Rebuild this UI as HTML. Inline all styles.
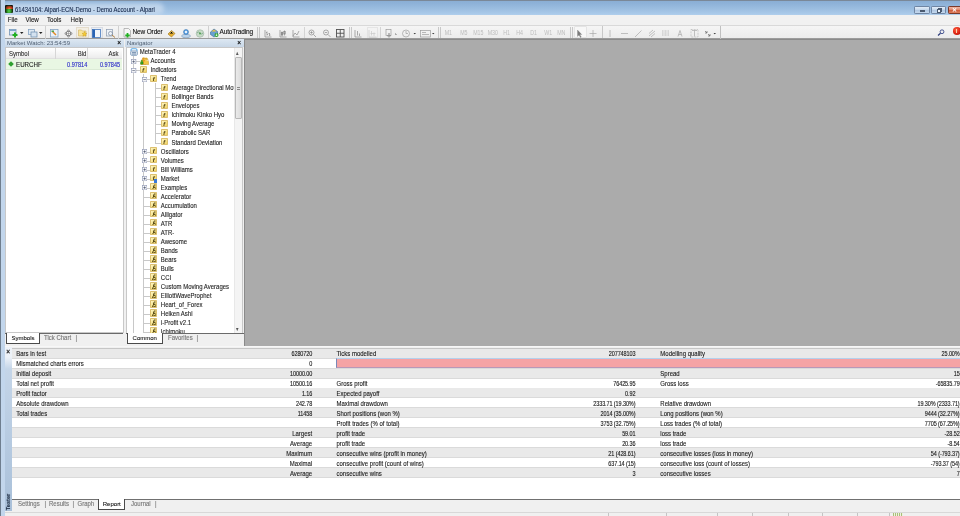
<!DOCTYPE html><html><head><meta charset="utf-8"><style>
*{box-sizing:border-box;margin:0;padding:0}
html,body{width:960px;height:516px;overflow:hidden;background:#f0f0f0}
body{position:relative;font-family:"Liberation Sans",sans-serif;font-size:6.0px;letter-spacing:0;color:#1a1a1a}
.a{position:absolute}
.t{position:absolute;white-space:nowrap;line-height:10px;height:10px;transform:scaleY(1.22);-webkit-text-stroke-width:0.1px}
.r{text-align:right}
#lframe{left:0;top:0;width:5px;height:516px;background:linear-gradient(90deg,#6f7e8e 0,#6f7e8e 1px,#c2d6ec 1px,#c2d6ec 5px)}
#title{left:0;top:0;width:960px;height:15px;background:linear-gradient(#8aaed4 0,#8fb3d9 3px,#9cbee0 8px,#aacaea 13px,#b8d4ee 15px);border-top:1px solid #7a8898}
#menubar{left:5px;top:15px;width:955px;height:10px;background:#f1f1f1}
#toolbar{left:5px;top:25px;width:955px;height:14px;background:linear-gradient(#f5f5f5,#ececec);border-top:1px solid #d9d9d9;border-bottom:1px solid #9c9c9c}
#chart{left:244px;top:39px;width:716px;height:307px;background:#ababab;border-left:1px solid #8a8a8a;border-top:1px solid #8a8a8a}
.panel{background:#f0f0f0}
.phead{position:absolute;left:0;top:0;height:8px;width:100%;background:linear-gradient(#dde8f3,#c8d7e7);color:#4e5e72;line-height:8.6px;padding-left:2px;white-space:nowrap;font-size:5.96px}
.px{position:absolute;right:3px;top:0.3px;font-size:6.5px;line-height:8px;color:#000;font-weight:bold}
.tabbar{position:absolute;height:13px;border-top:1px solid #6a6a6a;background:#f0f0f0}
.tab{position:absolute;top:-1px;height:11px;line-height:10.5px;color:#777;white-space:nowrap;transform:scaleY(1.15);-webkit-text-stroke-width:0.12px}
.tab.on{background:#fff;border:1px solid #4a4a4a;border-top:none;color:#111;transform:none;-webkit-text-stroke-width:0.08px}
.white{background:#fff}
.row{position:absolute;left:0;width:948px;height:10px}
.g{background:#e9e9e9}
.ln{border-bottom:1px solid #d8d8d8}
.ico{position:absolute;width:7px;height:7.2px;border-radius:0.8px;background:linear-gradient(135deg,#fdf5c4,#f7e48c 55%,#efd060);border:0.7px solid #dcc070;overflow:hidden}
.ico i{position:absolute;left:0.9px;top:-2.2px;font-style:italic;font-family:"Liberation Serif",serif;font-size:6.2px;color:#4a3a10;font-weight:bold;line-height:10px;letter-spacing:0}
.exp{position:absolute;width:5px;height:5px;border:0.7px solid #a4a8c4;background:linear-gradient(#fff,#e8eaf2)}
.exp:before{content:"";position:absolute;left:0.8px;top:1.7px;width:2.2px;height:0.6px;background:#4a5a7a}
.exp.p:after{content:"";position:absolute;left:1.6px;top:0.8px;width:0.6px;height:2.2px;background:#4a5a7a}
.vl{position:absolute;width:0.7px;background:#c8c8c8}
.hl{position:absolute;height:0.7px;background:#c8c8c8}
</style></head><body><div id="root" class="a" style="left:0;top:0;width:960px;height:516px;overflow:hidden;will-change:transform;background:#f0f0f0">
<div id="title" class="a">
<div class="a" style="left:2px;top:2px;width:162px;height:12px;background:#c6d9ee;border-radius:6px;filter:blur(2px);opacity:.85"></div>
<div class="a" style="left:5px;top:4px;width:8px;height:8px;background:radial-gradient(ellipse at 50% 75%,#5ad04a 0,#2f9a2a 30%,#1b3a10 60%,#101010 80%);border-radius:1px"></div>
<div class="a" style="left:5.5px;top:4.5px;width:7px;height:3.5px;background:radial-gradient(ellipse at 50% 100%,#e8a030 0,#c0301a 50%,rgba(16,16,16,0) 100%);"></div>
<div class="t" style="left:15px;top:3.8px;color:#172a4c;font-size:5.9px;letter-spacing:0">61434104: Alpari-ECN-Demo - Demo Account - Alpari</div>
<div class="a" style="left:914px;top:5.3px;width:15.5px;height:7.8px;border:0.8px solid #6f85a3;border-radius:1.2px;background:linear-gradient(#e3edf8,#c2d5ea 50%,#aec6e2 51%,#c5d9ee)"><div class="a" style="left:4.8px;top:2.8px;width:5px;height:2px;background:#f4f8fc;border:0.6px solid #4a5a70"></div></div>
<div class="a" style="left:931px;top:5.3px;width:15px;height:7.8px;border:0.8px solid #6f85a3;border-radius:1.2px;background:linear-gradient(#e3edf8,#c2d5ea 50%,#aec6e2 51%,#c5d9ee)"><div class="a" style="left:5.5px;top:1px;width:4px;height:3.5px;border:0.6px solid #4a5a70;border-top-width:1px;background:transparent"></div><div class="a" style="left:4.5px;top:2.2px;width:4px;height:3.5px;border:0.6px solid #4a5a70;border-top-width:1px;background:#eef4fa"></div></div>
<div class="a" style="left:947.5px;top:5.3px;width:14px;height:7.8px;border:0.8px solid #7a3a2a;border-radius:1.2px;background:linear-gradient(#eeb8a4,#e08468 50%,#cc5a3a 51%,#e08060)"><div class="t" style="left:3.6px;top:-2px;color:#fff;font-weight:bold;font-size:6px;-webkit-text-stroke-width:0;transform:none">&#x2715;</div></div>
</div>
<div id="lframe" class="a"></div>
<div id="menubar" class="a">
<div class="t" style="left:2.8px;top:0;color:#1a1a1a;font-size:6.2px">File</div>
<div class="t" style="left:20.5px;top:0;color:#1a1a1a;font-size:6.2px">View</div>
<div class="t" style="left:42px;top:0;color:#1a1a1a;font-size:6.2px">Tools</div>
<div class="t" style="left:65.5px;top:0;color:#1a1a1a;font-size:6.2px">Help</div>
</div>
<div id="toolbar" class="a"></div>
<div class="a" style="left:5px;top:25.5px;width:715px;height:13px">
 <!-- group borders -->
 <div class="a" style="left:0;top:0;width:40.5px;height:13px;border-right:0.7px solid #d0d0d0"></div>
 <div class="a" style="left:113px;top:0;width:0.7px;height:13px;background:#d0d0d0"></div>
 <div class="a" style="left:252px;top:1px;width:0.7px;height:11px;background:#c8c8c8"></div>
 <div class="a" style="left:254px;top:1px;width:0.7px;height:11px;background:#c8c8c8"></div>
 <div class="a" style="left:343.5px;top:1px;width:0.7px;height:11px;background:#c8c8c8"></div>
 <div class="a" style="left:345.5px;top:1px;width:0.7px;height:11px;background:#c8c8c8"></div>
 <div class="a" style="left:433px;top:1px;width:0.7px;height:11px;background:#c8c8c8"></div>
 <div class="a" style="left:435px;top:1px;width:0.7px;height:11px;background:#c8c8c8"></div>
 <div class="a" style="left:565px;top:1px;width:0.7px;height:11px;background:#c8c8c8"></div>
 <div class="a" style="left:567px;top:1px;width:0.7px;height:11px;background:#c8c8c8"></div>
 <div class="a" style="left:714.5px;top:0;width:0.7px;height:13px;background:#c0c0c0"></div>
</div>
<!-- group1 -->
<svg class="a" style="left:9px;top:28.5px" width="10" height="9" viewBox="0 0 20 18">
 <rect x="1" y="1" width="13" height="11" fill="#dfe9f3" stroke="#6f8fb0" stroke-width="1.5"/><rect x="1" y="1" width="13" height="3" fill="#7fa6cc"/>
 <path d="M12 7 v10 M7 12 h10" stroke="#22b022" stroke-width="4"/>
</svg>
<svg class="a" style="left:20px;top:31.5px" width="4" height="3" viewBox="0 0 8 6"><path d="M0 0 h7 l-3.5 4z" fill="#222"/></svg>
<svg class="a" style="left:28px;top:28.5px" width="10" height="9" viewBox="0 0 20 18">
 <rect x="1" y="1" width="12" height="10" fill="#dfe9f3" stroke="#7f9fc0" stroke-width="1.5"/>
 <rect x="6" y="6" width="12" height="10" fill="#d4e2f0" stroke="#6f8fb0" stroke-width="1.5"/>
</svg>
<svg class="a" style="left:39px;top:31.5px" width="4" height="3" viewBox="0 0 8 6"><path d="M0 0 h7 l-3.5 4z" fill="#222"/></svg>
<!-- group2 -->
<svg class="a" style="left:50px;top:28.5px" width="9" height="9" viewBox="0 0 18 18">
 <rect x="1" y="1" width="15" height="15" fill="#eaf2fa" stroke="#7f9fc0" stroke-width="1.5"/><path d="M5 5 L12 12" stroke="#e08a2a" stroke-width="3"/><rect x="3" y="3" width="5" height="3" fill="#50a050"/>
</svg>
<svg class="a" style="left:64px;top:28.5px" width="9" height="9" viewBox="0 0 18 18">
 <path d="M9 1.5 L12 5 L6 5Z M9 16.5 L12 13 L6 13Z M1.5 9 L5 6 L5 12Z M16.5 9 L13 6 L13 12Z" fill="none" stroke="#6a6a6a" stroke-width="1.5" stroke-linejoin="round"/><path d="M9 5 v8 M5 9 h8" stroke="#909090" stroke-width="1.2"/>
</svg>
<div class="a" style="left:76px;top:26.5px;width:13px;height:11.5px;background:#f3efe4;border:0.6px solid #e4dccb"></div>
<svg class="a" style="left:77.5px;top:28px" width="10" height="9" viewBox="0 0 20 18">
 <path d="M1 4 h6 l2 2 h7 v10 h-15z" fill="#f8e49a" stroke="#d0b060" stroke-width="1.2"/><path d="M13 7 l1.5 3.5 l3.5 0.3 l-2.7 2.3 l0.9 3.5 l-3.2 -2 l-3.2 2 l0.9 -3.5 l-2.7 -2.3 l3.5 -0.3z" fill="#f8d030" stroke="#c09020" stroke-width="0.8"/>
</svg>
<div class="a" style="left:90.5px;top:26.5px;width:12px;height:11px;background:#eaeef4;border:0.6px solid #d8dce4"></div>
<svg class="a" style="left:92px;top:28.5px" width="9" height="9" viewBox="0 0 18 18">
 <rect x="1" y="1" width="16" height="16" fill="#f2f6fb" stroke="#3a70b8" stroke-width="1.5"/><rect x="1" y="1" width="5" height="16" fill="#2a64b4"/>
</svg>
<svg class="a" style="left:105.5px;top:28.5px" width="10" height="9" viewBox="0 0 20 18">
 <rect x="1" y="1" width="12" height="13" fill="#eef2f6" stroke="#8a9ab0" stroke-width="1.4"/><circle cx="9" cy="9" r="4" fill="none" stroke="#7a8aa0" stroke-width="1.4"/><path d="M12 12 L18 17" stroke="#b08040" stroke-width="2"/>
</svg>
<!-- group3 -->
<svg class="a" style="left:122.5px;top:28px" width="9" height="10" viewBox="0 0 18 20">
 <path d="M2 1 h9 l4 4 v13 h-13z" fill="#f6f6f6" stroke="#909090" stroke-width="1.2"/><path d="M9 10 v9 M4.5 14.5 h9" stroke="#20b020" stroke-width="3.5"/>
</svg>
<div class="t" style="left:132.5px;top:27px;font-size:6.5px;letter-spacing:-0.15px;color:#111">New Order</div>
<svg class="a" style="left:167px;top:28.5px" width="9" height="9" viewBox="0 0 18 18">
 <path d="M2 10 L9 3 L16 9 L9 16 Z" fill="#e8b030" stroke="#a07010" stroke-width="1.2"/><path d="M5 9 L9 5 L13 9" stroke="#fff0a0" stroke-width="1"/>
</svg>
<svg class="a" style="left:180.5px;top:28px" width="10" height="10" viewBox="0 0 20 20">
 <ellipse cx="10" cy="16" rx="9" ry="3.5" fill="#bcd4ea" stroke="#6a8cb0" stroke-width="1"/><circle cx="10" cy="8" r="5" fill="#5a9ee0" stroke="#2a6aa8" stroke-width="1"/><circle cx="10" cy="8" r="2.5" fill="#e8f2fc"/>
</svg>
<svg class="a" style="left:194.5px;top:28.5px" width="10" height="9" viewBox="0 0 20 18">
 <circle cx="10" cy="9" r="7.5" fill="#c8dcc8" stroke="#98b0a0" stroke-width="1.2"/><path d="M4 8 q3 -4 6 0 t6 0" stroke="#70a080" stroke-width="1.5" fill="none"/><circle cx="10" cy="9" r="2" fill="#50a050"/>
</svg>
<div class="a" style="left:208px;top:26px;width:0.7px;height:12px;background:#d0d0d0"></div>
<svg class="a" style="left:209.5px;top:28px" width="9" height="10" viewBox="0 0 18 20">
 <path d="M1 8 L8 2 L15 7 L15 13 L8 18 L1 13Z" fill="#6aa0d0" stroke="#3a6a9a" stroke-width="1.2"/><path d="M3 7 L8 3 L13 7" fill="#f0c040"/><circle cx="13" cy="14" r="4" fill="#2aa02a"/><path d="M13 11 v5 M11 13.5 l2 2.5 l2 -2.5" stroke="#fff" stroke-width="1.2" fill="none"/>
</svg>
<div class="t" style="left:219.5px;top:27px;font-size:6.5px;letter-spacing:-0.15px;color:#111">AutoTrading</div>
<!-- group4 chart tools (gray) -->
<svg class="a" style="left:264px;top:28.5px" width="96" height="9" viewBox="0 0 192 18" fill="none" stroke="#8a8a8a" stroke-width="1.4">
 <path d="M2 2 v14 h13 M6 5 v8 M4 7 h2 M6 11 h2 M11 8 v6 M9 9 h2 M11 12 h2"/>
 <path d="M32 2 v14 h13 M36 5 v10 M41 3 v10"/><rect x="34.5" y="7" width="3" height="5" fill="#8a8a8a"/><rect x="39.5" y="5" width="3" height="5"/>
 <path d="M58 2 v14 h13 M58 14 l4 -6 l4 4 l4 -8"/>
</svg>
<div class="a" style="left:304px;top:27px;width:0.7px;height:11px;background:#d4d4d4"></div>
<svg class="a" style="left:308px;top:28.5px" width="40" height="9" viewBox="0 0 80 18" fill="none" stroke="#8a8a8a" stroke-width="1.4">
 <circle cx="7" cy="7" r="5"/><path d="M11 11 l5 5 M4.5 7 h5 M7 4.5 v5"/>
 <circle cx="36" cy="7" r="5"/><path d="M40 11 l5 5 M33.5 7 h5"/>
 <rect x="57" y="1" width="15" height="15" stroke="#505050" stroke-width="1.8"/><path d="M64.5 1 v15 M57 8.5 h15" stroke="#505050" stroke-width="1.8"/>
</svg>
<svg class="a" style="left:354px;top:28.5px" width="24" height="9" viewBox="0 0 48 18" fill="none" stroke="#8a8a8a" stroke-width="1.4">
 <path d="M2 2 v14 h13 M7 4 v9 M11 9 v5"/>
 <path d="M30 2 v14 h15 M35 4 v9 M40 7 v7 M33 9 h10"/>
</svg>
<div class="a" style="left:367px;top:26.5px;width:11px;height:11px;border:0.6px solid #dcdcdc;background:#f4f4f4;opacity:.6"></div>
<div class="a" style="left:380px;top:27px;width:0.7px;height:11px;background:#d4d4d4"></div>
<svg class="a" style="left:385px;top:28.5px" width="52" height="9" viewBox="0 0 104 18" fill="none" stroke="#989898" stroke-width="1.3">
 <rect x="2" y="1" width="10" height="12"/><path d="M8 8 v9 M4 13 h8" stroke-width="2.5"/>
 <path d="M21 9 l2 2 l-2 0z" fill="#333"/>
 <circle cx="42" cy="9" r="7"/><path d="M42 4 v5 h4"/>
 <path d="M57 8 l2.5 2.5 l2.5 -2.5z" fill="#333" stroke="none"/>
 <rect x="71" y="3" width="20" height="13"/><path d="M74 7 h8 M74 11 h14"/>
 <path d="M94 8 l2.5 2.5 l2.5 -2.5z" fill="#333" stroke="none"/>
</svg>
<div class="t" style="left:444.7px;top:27.5px;width:120px;font-size:5.3px;letter-spacing:0;color:#bcbcbc;-webkit-text-stroke-width:0;word-spacing:0">M1</div>
<div class="t" style="left:460.2px;top:27.5px;font-size:5.3px;letter-spacing:0;color:#bcbcbc;-webkit-text-stroke-width:0">M5</div>
<div class="t" style="left:473.2px;top:27.5px;font-size:5.3px;letter-spacing:0;color:#bcbcbc;-webkit-text-stroke-width:0">M15</div>
<div class="t" style="left:487.7px;top:27.5px;font-size:5.3px;letter-spacing:0;color:#bcbcbc;-webkit-text-stroke-width:0">M30</div>
<div class="t" style="left:503.2px;top:27.5px;font-size:5.3px;letter-spacing:0;color:#bcbcbc;-webkit-text-stroke-width:0">H1</div>
<div class="t" style="left:516.2px;top:27.5px;font-size:5.3px;letter-spacing:0;color:#bcbcbc;-webkit-text-stroke-width:0">H4</div>
<div class="t" style="left:530.2px;top:27.5px;font-size:5.3px;letter-spacing:0;color:#bcbcbc;-webkit-text-stroke-width:0">D1</div>
<div class="t" style="left:544.2px;top:27.5px;font-size:5.3px;letter-spacing:0;color:#bcbcbc;-webkit-text-stroke-width:0">W1</div>
<div class="t" style="left:557.2px;top:27.5px;font-size:5.3px;letter-spacing:0;color:#bcbcbc;-webkit-text-stroke-width:0">MN</div>
<div class="a" style="left:573.5px;top:26px;width:13px;height:12px;background:#f7f7f7;border:0.6px solid #e4e4e4;border-radius:1px"></div>
<svg class="a" style="left:576px;top:28.5px" width="145" height="9" viewBox="0 0 290 18" fill="none" stroke="#a4a4a4" stroke-width="1.3">
 <path d="M3 2 v13 l3 -3 l3 5 l1.5 -1 l-3 -5 h4z" fill="#7a7a7a" stroke="#7a7a7a" stroke-width="0.6"/>
 <path d="M34 2 v14 M27 9 h14"/>
 <path d="M68 2 v14" />
 <path d="M90 9 h14"/>
 <path d="M118 16 l13 -13"/>
 <path d="M146 14 l12 -10 M146 9 l8 -7 M150 16 l8 -7" />
 <path d="M172 4 h14 M172 8 h14 M172 12 h14" stroke-dasharray="2 1"/>
 <path d="M204 15 l4 -12 l4 12 M205.5 11 h5"/>
 <path d="M232 3 h10 M237 3 v12"/><rect x="230" y="1" width="14" height="15" stroke-dasharray="1.5 1.5"/>
 <path d="M258 4 l4 4 M262 4 v4 h-4 M264 10 l4 4 M268 10 v4 h-4" stroke="#606060"/>
 <path d="M275 8 l2.5 2.5 l2.5 -2.5z" fill="#333" stroke="none"/>
</svg>
<div class="a" style="left:602px;top:26px;width:0.7px;height:12px;background:#c8c8c8"></div>
<!-- right -->
<svg class="a" style="left:936.5px;top:28.5px" width="8" height="7" viewBox="0 0 16 14">
 <circle cx="10" cy="5.5" r="3.8" fill="none" stroke="#3a4a8a" stroke-width="1.8"/><path d="M7 8.5 L2 13" stroke="#2a3a7a" stroke-width="2.4"/>
</svg>
<div class="a" style="left:952.5px;top:27px;width:8px;height:7.5px;border-radius:50%;background:radial-gradient(circle at 40% 35%,#ff6040,#d82010 60%,#a01008)"></div>
<div class="a" style="left:955.5px;top:28.5px;width:1.5px;height:4.5px;background:#ffd0b0"></div>

<div id="chart" class="a"></div>
<div class="a panel" style="left:5px;top:39px;width:119px;height:307px">
<div class="phead">Market Watch: 23:54:59<span class="px">&#215;</span></div>
<div class="a white" style="left:0;top:8px;width:118.6px;height:286px;border:0.6px solid #c8c8c8"></div>
<div class="a" style="left:0.5px;top:8.5px;width:116px;height:11.5px;background:linear-gradient(#fff,#f4f4f4 60%,#ececec);border-bottom:0.6px solid #e0e0e0"></div>
<div class="a" style="left:50px;top:9px;width:0;height:21px;border-left:0.6px solid #d6d6d6"></div>
<div class="a" style="left:82.4px;top:9px;width:0;height:21px;border-left:0.6px solid #d6d6d6"></div>
<div class="t" style="left:4px;top:9.6px;color:#333">Symbol</div>
<div class="t r" style="left:50px;width:31.3px;top:9.6px;color:#333">Bid</div>
<div class="t r" style="left:83px;width:30.5px;top:9.6px;color:#333">Ask</div>
<div class="a" style="left:0.5px;top:20px;width:116px;height:10.5px;background:#e9f7e3;border-bottom:0.6px solid #dcebd6"></div>
<div class="a" style="left:3.5px;top:23px;width:4px;height:4px;background:#2fa12f;transform:rotate(45deg)"></div>
<div class="t" style="left:11px;top:20.6px;color:#222;font-size:6.2px">EURCHF</div>
<div class="t r" style="left:50px;width:32.3px;top:19.9px;color:#2a2ac8;font-size:5.6px;letter-spacing:0;transform:scaleY(1.3)">0.97814</div>
<div class="t r" style="left:83px;width:32.2px;top:19.9px;color:#2a2ac8;font-size:5.6px;letter-spacing:0;transform:scaleY(1.3)">0.97845</div>
<div class="tabbar" style="left:0;top:294px;width:118px"></div>
<div class="tab on" style="left:1px;top:294px;width:34px;height:10.5px;text-align:center;line-height:10px">Symbols</div>
<div class="tab" style="left:39px;top:294px">Tick Chart</div>
<div class="tab" style="left:70.5px;top:294px">|</div>
</div>
<div class="a panel" style="left:125px;top:39px;width:119px;height:307px">
<div class="phead">Navigator<span class="px">&#215;</span></div>
<div class="a white" style="left:1px;top:8px;width:117px;height:286.6px;border:0.6px solid #c8c8c8;overflow:hidden" id="tree">
<div class="vl" style="left:6.400000000000006px;top:8.399999999999999px;height:300px"></div>
<div class="vl" style="left:16.30000000000001px;top:26.4px;height:300px"></div>
<div class="vl" style="left:28.0px;top:35.4px;height:59.5px"></div>
<svg class="a" style="left:2.9000000000000057px;top:0.19999999999999574px" width="8" height="8" viewBox="0 0 16 16"><path d="M3.5 1.5 h8 a2.5 2.5 0 0 1 2.5 2.5 v2.5 M2 6 v-2 a2.5 2.5 0 0 1 2.5 -2.5" fill="none" stroke="#5aaae8" stroke-width="2.2"/><rect x="1.5" y="6" width="13" height="8.5" rx="1.5" fill="#f0f6fc" stroke="#7f9ab8" stroke-width="2"/><path d="M4 9.2 h8 M4 12 h8" stroke="#6a86a8" stroke-width="1.8"/></svg>
<div class="t" style="left:12.700000000000017px;top:-0.6000000000000014px;color:#1e1e1e">MetaTrader 4</div>
<div class="hl" style="left:6.400000000000006px;top:13.409999999999997px;width:6.5px"></div>
<svg class="a" style="left:4.400000000000006px;top:10.809999999999995px" width="5.2" height="5.2" viewBox="0 0 10 10"><rect x="0.6" y="0.6" width="8.8" height="8.8" fill="#fbfbfd" stroke="#9098b4" stroke-width="1.3"/><path d="M2.5 5 h5" stroke="#3a4660" stroke-width="1.2"/><path d="M5 2.5 v5" stroke="#3a4660" stroke-width="1.2"/></svg>
<svg class="a" style="left:12.900000000000006px;top:8.909999999999997px" width="9" height="8" viewBox="0 0 18 16"><circle cx="7" cy="3.5" r="3" fill="#f0b030"/><circle cx="12.5" cy="4" r="3" fill="#e8c040"/><path d="M2 15 v-5 a5 5 0 0 1 10 0 v5z" fill="#e89a20"/><path d="M8 15 v-5 a5 5 0 0 1 9.5 0 v5z" fill="#f2c848"/><path d="M0.5 15 v-3.5 a3 3 0 0 1 6 0 v3.5z" fill="#20a020"/><circle cx="3.5" cy="8" r="2" fill="#30b030"/><path d="M2 15 v-5 a5 5 0 0 1 15.5 0 v5z" fill="none" stroke="#b07a18" stroke-width="0.8"/></svg>
<div class="t" style="left:23.599999999999994px;top:8.409999999999997px;color:#1e1e1e">Accounts</div>
<div class="hl" style="left:6.400000000000006px;top:22.419999999999995px;width:6.5px"></div>
<svg class="a" style="left:4.400000000000006px;top:19.82px" width="5.2" height="5.2" viewBox="0 0 10 10"><rect x="0.6" y="0.6" width="8.8" height="8.8" fill="#fbfbfd" stroke="#9098b4" stroke-width="1.3"/><path d="M2.5 5 h5" stroke="#3a4660" stroke-width="1.2"/></svg>
<div class="ico" style="left:12.900000000000006px;top:18.119999999999997px"><i>&#x0192;</i></div>
<div class="t" style="left:23.599999999999994px;top:17.419999999999995px;color:#1e1e1e">Indicators</div>
<div class="hl" style="left:16.30000000000001px;top:31.43px;width:7.099999999999994px"></div>
<svg class="a" style="left:14.700000000000017px;top:28.830000000000005px" width="5.2" height="5.2" viewBox="0 0 10 10"><rect x="0.6" y="0.6" width="8.8" height="8.8" fill="#fbfbfd" stroke="#9098b4" stroke-width="1.3"/><path d="M2.5 5 h5" stroke="#3a4660" stroke-width="1.2"/></svg>
<div class="ico" style="left:23.400000000000006px;top:27.130000000000003px"><i>&#x0192;</i></div>
<div class="t" style="left:33.80000000000001px;top:26.43px;color:#1e1e1e">Trend</div>
<div class="hl" style="left:28.0px;top:40.43999999999999px;width:5.900000000000006px"></div>
<div class="ico" style="left:33.900000000000006px;top:36.13999999999999px"><i>&#x0192;</i></div>
<div class="t" style="left:44.400000000000006px;top:35.43999999999999px;color:#1e1e1e">Average Directional Movement Index</div>
<div class="hl" style="left:28.0px;top:49.449999999999996px;width:5.900000000000006px"></div>
<div class="ico" style="left:33.900000000000006px;top:45.15px"><i>&#x0192;</i></div>
<div class="t" style="left:44.400000000000006px;top:44.449999999999996px;color:#1e1e1e">Bollinger Bands</div>
<div class="hl" style="left:28.0px;top:58.46px;width:5.900000000000006px"></div>
<div class="ico" style="left:33.900000000000006px;top:54.160000000000004px"><i>&#x0192;</i></div>
<div class="t" style="left:44.400000000000006px;top:53.46px;color:#1e1e1e">Envelopes</div>
<div class="hl" style="left:28.0px;top:67.47px;width:5.900000000000006px"></div>
<div class="ico" style="left:33.900000000000006px;top:63.169999999999995px"><i>&#x0192;</i></div>
<div class="t" style="left:44.400000000000006px;top:62.46999999999999px;color:#1e1e1e">Ichimoku Kinko Hyo</div>
<div class="hl" style="left:28.0px;top:76.47999999999999px;width:5.900000000000006px"></div>
<div class="ico" style="left:33.900000000000006px;top:72.18px"><i>&#x0192;</i></div>
<div class="t" style="left:44.400000000000006px;top:71.47999999999999px;color:#1e1e1e">Moving Average</div>
<div class="hl" style="left:28.0px;top:85.49000000000001px;width:5.900000000000006px"></div>
<div class="ico" style="left:33.900000000000006px;top:81.19px"><i>&#x0192;</i></div>
<div class="t" style="left:44.400000000000006px;top:80.49000000000001px;color:#1e1e1e">Parabolic SAR</div>
<div class="hl" style="left:28.0px;top:94.5px;width:5.900000000000006px"></div>
<div class="ico" style="left:33.900000000000006px;top:90.19999999999999px"><i>&#x0192;</i></div>
<div class="t" style="left:44.400000000000006px;top:89.5px;color:#1e1e1e">Standard Deviation</div>
<div class="hl" style="left:16.30000000000001px;top:103.51000000000002px;width:7.099999999999994px"></div>
<svg class="a" style="left:14.700000000000017px;top:100.91000000000003px" width="5.2" height="5.2" viewBox="0 0 10 10"><rect x="0.6" y="0.6" width="8.8" height="8.8" fill="#fbfbfd" stroke="#9098b4" stroke-width="1.3"/><path d="M2.5 5 h5" stroke="#3a4660" stroke-width="1.2"/><path d="M5 2.5 v5" stroke="#3a4660" stroke-width="1.2"/></svg>
<div class="ico" style="left:23.400000000000006px;top:99.21000000000001px"><i>&#x0192;</i></div>
<div class="t" style="left:33.80000000000001px;top:98.51000000000002px;color:#1e1e1e">Oscillators</div>
<div class="hl" style="left:16.30000000000001px;top:112.52000000000001px;width:7.099999999999994px"></div>
<svg class="a" style="left:14.700000000000017px;top:109.92000000000002px" width="5.2" height="5.2" viewBox="0 0 10 10"><rect x="0.6" y="0.6" width="8.8" height="8.8" fill="#fbfbfd" stroke="#9098b4" stroke-width="1.3"/><path d="M2.5 5 h5" stroke="#3a4660" stroke-width="1.2"/><path d="M5 2.5 v5" stroke="#3a4660" stroke-width="1.2"/></svg>
<div class="ico" style="left:23.400000000000006px;top:108.22px"><i>&#x0192;</i></div>
<div class="t" style="left:33.80000000000001px;top:107.52000000000001px;color:#1e1e1e">Volumes</div>
<div class="hl" style="left:16.30000000000001px;top:121.53px;width:7.099999999999994px"></div>
<svg class="a" style="left:14.700000000000017px;top:118.93px" width="5.2" height="5.2" viewBox="0 0 10 10"><rect x="0.6" y="0.6" width="8.8" height="8.8" fill="#fbfbfd" stroke="#9098b4" stroke-width="1.3"/><path d="M2.5 5 h5" stroke="#3a4660" stroke-width="1.2"/><path d="M5 2.5 v5" stroke="#3a4660" stroke-width="1.2"/></svg>
<div class="ico" style="left:23.400000000000006px;top:117.22999999999999px"><i>&#x0192;</i></div>
<div class="t" style="left:33.80000000000001px;top:116.53px;color:#1e1e1e">Bill Williams</div>
<div class="hl" style="left:16.30000000000001px;top:130.54px;width:7.099999999999994px"></div>
<svg class="a" style="left:14.700000000000017px;top:127.94px" width="5.2" height="5.2" viewBox="0 0 10 10"><rect x="0.6" y="0.6" width="8.8" height="8.8" fill="#fbfbfd" stroke="#9098b4" stroke-width="1.3"/><path d="M2.5 5 h5" stroke="#3a4660" stroke-width="1.2"/><path d="M5 2.5 v5" stroke="#3a4660" stroke-width="1.2"/></svg>
<div class="ico" style="left:23.400000000000006px;top:126.23999999999998px"><i>&#x0192;</i></div>
<div class="a" style="left:26.900000000000006px;top:131.04px;width:3.5px;height:3.5px;background:#3a7ad8"></div>
<div class="t" style="left:33.80000000000001px;top:125.53999999999999px;color:#1e1e1e">Market</div>
<div class="hl" style="left:16.30000000000001px;top:139.55px;width:7.099999999999994px"></div>
<svg class="a" style="left:14.700000000000017px;top:136.95000000000002px" width="5.2" height="5.2" viewBox="0 0 10 10"><rect x="0.6" y="0.6" width="8.8" height="8.8" fill="#fbfbfd" stroke="#9098b4" stroke-width="1.3"/><path d="M2.5 5 h5" stroke="#3a4660" stroke-width="1.2"/><path d="M5 2.5 v5" stroke="#3a4660" stroke-width="1.2"/></svg>
<div class="ico" style="left:23.400000000000006px;top:135.25px"><svg width="7" height="7" viewBox="0 0 14 14" style="position:absolute;left:-0.7px;top:-0.7px"><path d="M9 2 C6 1.5 4.5 3.5 5.5 6 C6.5 8.5 3 8 3 10.5 C3 13 6.5 12.5 7.5 10 M4.5 6.5 h4.5" stroke="#3e3206" stroke-width="2" fill="none"/><circle cx="10.8" cy="10.8" r="2.2" fill="none" stroke="#4a4a20" stroke-width="1.6"/></svg></div>
<div class="t" style="left:33.80000000000001px;top:134.55px;color:#1e1e1e">Examples</div>
<div class="hl" style="left:16.30000000000001px;top:148.56px;width:7.099999999999994px"></div>
<div class="ico" style="left:23.400000000000006px;top:144.26px"><svg width="7" height="7" viewBox="0 0 14 14" style="position:absolute;left:-0.7px;top:-0.7px"><path d="M9 2 C6 1.5 4.5 3.5 5.5 6 C6.5 8.5 3 8 3 10.5 C3 13 6.5 12.5 7.5 10 M4.5 6.5 h4.5" stroke="#3e3206" stroke-width="2" fill="none"/><circle cx="10.8" cy="10.8" r="2.2" fill="none" stroke="#4a4a20" stroke-width="1.6"/></svg></div>
<div class="t" style="left:33.80000000000001px;top:143.56px;color:#1e1e1e">Accelerator</div>
<div class="hl" style="left:16.30000000000001px;top:157.57px;width:7.099999999999994px"></div>
<div class="ico" style="left:23.400000000000006px;top:153.26999999999998px"><svg width="7" height="7" viewBox="0 0 14 14" style="position:absolute;left:-0.7px;top:-0.7px"><path d="M9 2 C6 1.5 4.5 3.5 5.5 6 C6.5 8.5 3 8 3 10.5 C3 13 6.5 12.5 7.5 10 M4.5 6.5 h4.5" stroke="#3e3206" stroke-width="2" fill="none"/><circle cx="10.8" cy="10.8" r="2.2" fill="none" stroke="#4a4a20" stroke-width="1.6"/></svg></div>
<div class="t" style="left:33.80000000000001px;top:152.57px;color:#1e1e1e">Accumulation</div>
<div class="hl" style="left:16.30000000000001px;top:166.58px;width:7.099999999999994px"></div>
<div class="ico" style="left:23.400000000000006px;top:162.28px"><svg width="7" height="7" viewBox="0 0 14 14" style="position:absolute;left:-0.7px;top:-0.7px"><path d="M9 2 C6 1.5 4.5 3.5 5.5 6 C6.5 8.5 3 8 3 10.5 C3 13 6.5 12.5 7.5 10 M4.5 6.5 h4.5" stroke="#3e3206" stroke-width="2" fill="none"/><circle cx="10.8" cy="10.8" r="2.2" fill="none" stroke="#4a4a20" stroke-width="1.6"/></svg></div>
<div class="t" style="left:33.80000000000001px;top:161.58px;color:#1e1e1e">Alligator</div>
<div class="hl" style="left:16.30000000000001px;top:175.59px;width:7.099999999999994px"></div>
<div class="ico" style="left:23.400000000000006px;top:171.29px"><svg width="7" height="7" viewBox="0 0 14 14" style="position:absolute;left:-0.7px;top:-0.7px"><path d="M9 2 C6 1.5 4.5 3.5 5.5 6 C6.5 8.5 3 8 3 10.5 C3 13 6.5 12.5 7.5 10 M4.5 6.5 h4.5" stroke="#3e3206" stroke-width="2" fill="none"/><circle cx="10.8" cy="10.8" r="2.2" fill="none" stroke="#4a4a20" stroke-width="1.6"/></svg></div>
<div class="t" style="left:33.80000000000001px;top:170.59px;color:#1e1e1e">ATR</div>
<div class="hl" style="left:16.30000000000001px;top:184.6px;width:7.099999999999994px"></div>
<div class="ico" style="left:23.400000000000006px;top:180.29999999999998px"><svg width="7" height="7" viewBox="0 0 14 14" style="position:absolute;left:-0.7px;top:-0.7px"><path d="M9 2 C6 1.5 4.5 3.5 5.5 6 C6.5 8.5 3 8 3 10.5 C3 13 6.5 12.5 7.5 10 M4.5 6.5 h4.5" stroke="#3e3206" stroke-width="2" fill="none"/><circle cx="10.8" cy="10.8" r="2.2" fill="none" stroke="#4a4a20" stroke-width="1.6"/></svg></div>
<div class="t" style="left:33.80000000000001px;top:179.6px;color:#1e1e1e">ATR-</div>
<div class="hl" style="left:16.30000000000001px;top:193.61px;width:7.099999999999994px"></div>
<div class="ico" style="left:23.400000000000006px;top:189.31px"><svg width="7" height="7" viewBox="0 0 14 14" style="position:absolute;left:-0.7px;top:-0.7px"><path d="M9 2 C6 1.5 4.5 3.5 5.5 6 C6.5 8.5 3 8 3 10.5 C3 13 6.5 12.5 7.5 10 M4.5 6.5 h4.5" stroke="#3e3206" stroke-width="2" fill="none"/><circle cx="10.8" cy="10.8" r="2.2" fill="none" stroke="#4a4a20" stroke-width="1.6"/></svg></div>
<div class="t" style="left:33.80000000000001px;top:188.61px;color:#1e1e1e">Awesome</div>
<div class="hl" style="left:16.30000000000001px;top:202.62px;width:7.099999999999994px"></div>
<div class="ico" style="left:23.400000000000006px;top:198.32px"><svg width="7" height="7" viewBox="0 0 14 14" style="position:absolute;left:-0.7px;top:-0.7px"><path d="M9 2 C6 1.5 4.5 3.5 5.5 6 C6.5 8.5 3 8 3 10.5 C3 13 6.5 12.5 7.5 10 M4.5 6.5 h4.5" stroke="#3e3206" stroke-width="2" fill="none"/><circle cx="10.8" cy="10.8" r="2.2" fill="none" stroke="#4a4a20" stroke-width="1.6"/></svg></div>
<div class="t" style="left:33.80000000000001px;top:197.62px;color:#1e1e1e">Bands</div>
<div class="hl" style="left:16.30000000000001px;top:211.63000000000002px;width:7.099999999999994px"></div>
<div class="ico" style="left:23.400000000000006px;top:207.33px"><svg width="7" height="7" viewBox="0 0 14 14" style="position:absolute;left:-0.7px;top:-0.7px"><path d="M9 2 C6 1.5 4.5 3.5 5.5 6 C6.5 8.5 3 8 3 10.5 C3 13 6.5 12.5 7.5 10 M4.5 6.5 h4.5" stroke="#3e3206" stroke-width="2" fill="none"/><circle cx="10.8" cy="10.8" r="2.2" fill="none" stroke="#4a4a20" stroke-width="1.6"/></svg></div>
<div class="t" style="left:33.80000000000001px;top:206.63000000000002px;color:#1e1e1e">Bears</div>
<div class="hl" style="left:16.30000000000001px;top:220.64000000000001px;width:7.099999999999994px"></div>
<div class="ico" style="left:23.400000000000006px;top:216.34px"><svg width="7" height="7" viewBox="0 0 14 14" style="position:absolute;left:-0.7px;top:-0.7px"><path d="M9 2 C6 1.5 4.5 3.5 5.5 6 C6.5 8.5 3 8 3 10.5 C3 13 6.5 12.5 7.5 10 M4.5 6.5 h4.5" stroke="#3e3206" stroke-width="2" fill="none"/><circle cx="10.8" cy="10.8" r="2.2" fill="none" stroke="#4a4a20" stroke-width="1.6"/></svg></div>
<div class="t" style="left:33.80000000000001px;top:215.64000000000001px;color:#1e1e1e">Bulls</div>
<div class="hl" style="left:16.30000000000001px;top:229.65px;width:7.099999999999994px"></div>
<div class="ico" style="left:23.400000000000006px;top:225.35px"><svg width="7" height="7" viewBox="0 0 14 14" style="position:absolute;left:-0.7px;top:-0.7px"><path d="M9 2 C6 1.5 4.5 3.5 5.5 6 C6.5 8.5 3 8 3 10.5 C3 13 6.5 12.5 7.5 10 M4.5 6.5 h4.5" stroke="#3e3206" stroke-width="2" fill="none"/><circle cx="10.8" cy="10.8" r="2.2" fill="none" stroke="#4a4a20" stroke-width="1.6"/></svg></div>
<div class="t" style="left:33.80000000000001px;top:224.65px;color:#1e1e1e">CCI</div>
<div class="hl" style="left:16.30000000000001px;top:238.66px;width:7.099999999999994px"></div>
<div class="ico" style="left:23.400000000000006px;top:234.35999999999999px"><svg width="7" height="7" viewBox="0 0 14 14" style="position:absolute;left:-0.7px;top:-0.7px"><path d="M9 2 C6 1.5 4.5 3.5 5.5 6 C6.5 8.5 3 8 3 10.5 C3 13 6.5 12.5 7.5 10 M4.5 6.5 h4.5" stroke="#3e3206" stroke-width="2" fill="none"/><circle cx="10.8" cy="10.8" r="2.2" fill="none" stroke="#4a4a20" stroke-width="1.6"/></svg></div>
<div class="t" style="left:33.80000000000001px;top:233.66px;color:#1e1e1e">Custom Moving Averages</div>
<div class="hl" style="left:16.30000000000001px;top:247.67px;width:7.099999999999994px"></div>
<div class="ico" style="left:23.400000000000006px;top:243.36999999999998px"><svg width="7" height="7" viewBox="0 0 14 14" style="position:absolute;left:-0.7px;top:-0.7px"><path d="M9 2 C6 1.5 4.5 3.5 5.5 6 C6.5 8.5 3 8 3 10.5 C3 13 6.5 12.5 7.5 10 M4.5 6.5 h4.5" stroke="#3e3206" stroke-width="2" fill="none"/><circle cx="10.8" cy="10.8" r="2.2" fill="none" stroke="#4a4a20" stroke-width="1.6"/></svg></div>
<div class="t" style="left:33.80000000000001px;top:242.67px;color:#1e1e1e">ElliottWaveProphet</div>
<div class="hl" style="left:16.30000000000001px;top:256.67999999999995px;width:7.099999999999994px"></div>
<div class="ico" style="left:23.400000000000006px;top:252.37999999999997px"><svg width="7" height="7" viewBox="0 0 14 14" style="position:absolute;left:-0.7px;top:-0.7px"><path d="M9 2 C6 1.5 4.5 3.5 5.5 6 C6.5 8.5 3 8 3 10.5 C3 13 6.5 12.5 7.5 10 M4.5 6.5 h4.5" stroke="#3e3206" stroke-width="2" fill="none"/><circle cx="10.8" cy="10.8" r="2.2" fill="none" stroke="#4a4a20" stroke-width="1.6"/></svg></div>
<div class="t" style="left:33.80000000000001px;top:251.67999999999998px;color:#1e1e1e">Heart_of_Forex</div>
<div class="hl" style="left:16.30000000000001px;top:265.69px;width:7.099999999999994px"></div>
<div class="ico" style="left:23.400000000000006px;top:261.39px"><svg width="7" height="7" viewBox="0 0 14 14" style="position:absolute;left:-0.7px;top:-0.7px"><path d="M9 2 C6 1.5 4.5 3.5 5.5 6 C6.5 8.5 3 8 3 10.5 C3 13 6.5 12.5 7.5 10 M4.5 6.5 h4.5" stroke="#3e3206" stroke-width="2" fill="none"/><circle cx="10.8" cy="10.8" r="2.2" fill="none" stroke="#4a4a20" stroke-width="1.6"/></svg></div>
<div class="t" style="left:33.80000000000001px;top:260.69px;color:#1e1e1e">Heiken Ashi</div>
<div class="hl" style="left:16.30000000000001px;top:274.7px;width:7.099999999999994px"></div>
<div class="ico" style="left:23.400000000000006px;top:270.4px"><svg width="7" height="7" viewBox="0 0 14 14" style="position:absolute;left:-0.7px;top:-0.7px"><path d="M9 2 C6 1.5 4.5 3.5 5.5 6 C6.5 8.5 3 8 3 10.5 C3 13 6.5 12.5 7.5 10 M4.5 6.5 h4.5" stroke="#3e3206" stroke-width="2" fill="none"/><circle cx="10.8" cy="10.8" r="2.2" fill="none" stroke="#4a4a20" stroke-width="1.6"/></svg></div>
<div class="t" style="left:33.80000000000001px;top:269.7px;color:#1e1e1e">i-Profit v2.1</div>
<div class="hl" style="left:16.30000000000001px;top:283.71px;width:7.099999999999994px"></div>
<div class="ico" style="left:23.400000000000006px;top:279.40999999999997px"><svg width="7" height="7" viewBox="0 0 14 14" style="position:absolute;left:-0.7px;top:-0.7px"><path d="M9 2 C6 1.5 4.5 3.5 5.5 6 C6.5 8.5 3 8 3 10.5 C3 13 6.5 12.5 7.5 10 M4.5 6.5 h4.5" stroke="#3e3206" stroke-width="2" fill="none"/><circle cx="10.8" cy="10.8" r="2.2" fill="none" stroke="#4a4a20" stroke-width="1.6"/></svg></div>
<div class="t" style="left:33.80000000000001px;top:278.71px;color:#1e1e1e">Ichimoku</div>
<div class="a" style="left:107.4px;top:0;width:8px;height:286px;background:#f4f4f4;border-left:0.6px solid #e8e8e8"></div>
<div class="a" style="left:108.4px;top:9.399999999999999px;width:6.5px;height:62px;background:linear-gradient(90deg,#eaeaea,#dcdcdc);border:0.6px solid #b8b8b8;border-radius:1px"></div>
<div class="a" style="left:109.9px;top:39.4px;width:3px;height:2.5px;border-top:0.5px solid #888;border-bottom:0.5px solid #888"></div>
<div class="t" style="left:109.4px;top:0.3999999999999986px;font-size:5px;color:#555">&#x25B4;</div>
<div class="t" style="left:109.4px;top:276.4px;font-size:5px;color:#555">&#x25BE;</div>
</div>
<div class="tabbar" style="left:1px;top:294px;width:118px"></div>
<div class="tab on" style="left:2px;top:294px;width:35.5px;height:10.5px;text-align:center;line-height:10px">Common</div>
<div class="tab" style="left:43px;top:294px">Favorites</div>
<div class="tab" style="left:71.5px;top:294px">|</div>
</div>
<div class="a" style="left:5px;top:345.7px;width:955px;height:171px;background:#f0f0f0"></div>
<div class="a" style="left:5px;top:345.7px;width:955px;height:1.4px;background:#f7f7f7"></div>
<div class="a" style="left:12px;top:347.6px;width:948px;height:1.1px;background:#c6c6c6"></div>
<div class="a" style="left:5px;top:347px;width:7px;height:164px;background:linear-gradient(#edf2f8 0,#edf2f8 10px,#c4d5e8 22px,#a9c0d9 100%)"></div>
<div class="t" style="left:6.2px;top:346.5px;font-size:6.5px;font-weight:bold;letter-spacing:0">&#215;</div>
<div class="t" style="left:-3.3px;top:496.5px;width:22px;transform:rotate(-90deg);font-size:5.6px;color:#1e2e44;text-align:center;font-weight:bold;letter-spacing:0">Tester</div>
<div class="a white" style="left:12px;top:348.7px;width:948px;height:150px;overflow:hidden">
<div class="row g" style="top:0.00px;border-bottom:0.6px solid #dadada"></div>
<div class="t" style="left:4.199999999999999px;top:0.60px">Bars in test</div>
<div class="t r" style="left:180.2px;width:120px;top:-0.30px;letter-spacing:-0.1px;font-size:5.5px;transform:scaleY(1.3);-webkit-text-stroke-width:0.1px;">6280720</div>
<div class="t" style="left:324.5px;top:0.60px">Ticks modelled</div>
<div class="t r" style="left:483.4px;width:140px;top:-0.30px;letter-spacing:-0.1px;font-size:5.5px;transform:scaleY(1.3);-webkit-text-stroke-width:0.1px;">207748103</div>
<div class="t" style="left:648.3px;top:0.60px">Modelling quality</div>
<div class="t r" style="left:807.6px;width:140px;top:-0.30px;letter-spacing:-0.1px;font-size:5.5px;transform:scaleY(1.3);-webkit-text-stroke-width:0.1px;">25.00%</div>
<div class="row" style="top:9.95px;border-bottom:0.6px solid #dadada"></div>
<div class="t" style="left:4.199999999999999px;top:10.55px">Mismatched charts errors</div>
<div class="t r" style="left:180.2px;width:120px;top:9.65px;letter-spacing:-0.1px;font-size:5.5px;transform:scaleY(1.3);-webkit-text-stroke-width:0.1px;">0</div>
<div class="a" style="left:324px;top:9.55px;width:640px;height:10px;background:#f5a3a5;border-top:0.9px solid #b4d0ec;border-left:0.9px solid #7a88b8;border-bottom:0.6px solid #b898b8"></div>
<div class="row g" style="top:19.90px;border-bottom:0.6px solid #dadada"></div>
<div class="t" style="left:4.199999999999999px;top:20.50px">Initial deposit</div>
<div class="t r" style="left:180.2px;width:120px;top:19.60px;letter-spacing:-0.1px;font-size:5.5px;transform:scaleY(1.3);-webkit-text-stroke-width:0.1px;">10000.00</div>
<div class="t" style="left:648.3px;top:20.50px">Spread</div>
<div class="t r" style="left:807.6px;width:140px;top:19.60px;letter-spacing:-0.1px;font-size:5.5px;transform:scaleY(1.3);-webkit-text-stroke-width:0.1px;">15</div>
<div class="row" style="top:29.85px;border-bottom:0.6px solid #dadada"></div>
<div class="t" style="left:4.199999999999999px;top:30.45px">Total net profit</div>
<div class="t r" style="left:180.2px;width:120px;top:29.55px;letter-spacing:-0.1px;font-size:5.5px;transform:scaleY(1.3);-webkit-text-stroke-width:0.1px;">10500.16</div>
<div class="t" style="left:324.5px;top:30.45px">Gross profit</div>
<div class="t r" style="left:483.4px;width:140px;top:29.55px;letter-spacing:-0.1px;font-size:5.5px;transform:scaleY(1.3);-webkit-text-stroke-width:0.1px;">76425.95</div>
<div class="t" style="left:648.3px;top:30.45px">Gross loss</div>
<div class="t r" style="left:807.6px;width:140px;top:29.55px;letter-spacing:-0.1px;font-size:5.5px;transform:scaleY(1.3);-webkit-text-stroke-width:0.1px;">-65835.79</div>
<div class="row g" style="top:39.80px;border-bottom:0.6px solid #dadada"></div>
<div class="t" style="left:4.199999999999999px;top:40.40px">Profit factor</div>
<div class="t r" style="left:180.2px;width:120px;top:39.50px;letter-spacing:-0.1px;font-size:5.5px;transform:scaleY(1.3);-webkit-text-stroke-width:0.1px;">1.16</div>
<div class="t" style="left:324.5px;top:40.40px">Expected payoff</div>
<div class="t r" style="left:483.4px;width:140px;top:39.50px;letter-spacing:-0.1px;font-size:5.5px;transform:scaleY(1.3);-webkit-text-stroke-width:0.1px;">0.92</div>
<div class="row" style="top:49.75px;border-bottom:0.6px solid #dadada"></div>
<div class="t" style="left:4.199999999999999px;top:50.35px">Absolute drawdown</div>
<div class="t r" style="left:180.2px;width:120px;top:49.45px;letter-spacing:-0.1px;font-size:5.5px;transform:scaleY(1.3);-webkit-text-stroke-width:0.1px;">242.78</div>
<div class="t" style="left:324.5px;top:50.35px">Maximal drawdown</div>
<div class="t r" style="left:483.4px;width:140px;top:49.45px;letter-spacing:-0.1px;font-size:5.5px;transform:scaleY(1.3);-webkit-text-stroke-width:0.1px;">2333.71 (19.30%)</div>
<div class="t" style="left:648.3px;top:50.35px">Relative drawdown</div>
<div class="t r" style="left:807.6px;width:140px;top:49.45px;letter-spacing:-0.1px;font-size:5.5px;transform:scaleY(1.3);-webkit-text-stroke-width:0.1px;">19.30% (2333.71)</div>
<div class="row g" style="top:59.70px;border-bottom:0.6px solid #dadada"></div>
<div class="t" style="left:4.199999999999999px;top:60.30px">Total trades</div>
<div class="t r" style="left:180.2px;width:120px;top:59.40px;letter-spacing:-0.1px;font-size:5.5px;transform:scaleY(1.3);-webkit-text-stroke-width:0.1px;">11458</div>
<div class="t" style="left:324.5px;top:60.30px">Short positions (won %)</div>
<div class="t r" style="left:483.4px;width:140px;top:59.40px;letter-spacing:-0.1px;font-size:5.5px;transform:scaleY(1.3);-webkit-text-stroke-width:0.1px;">2014 (35.00%)</div>
<div class="t" style="left:648.3px;top:60.30px">Long positions (won %)</div>
<div class="t r" style="left:807.6px;width:140px;top:59.40px;letter-spacing:-0.1px;font-size:5.5px;transform:scaleY(1.3);-webkit-text-stroke-width:0.1px;">9444 (32.27%)</div>
<div class="row" style="top:69.65px;border-bottom:0.6px solid #dadada"></div>
<div class="t" style="left:324.5px;top:70.25px">Profit trades (% of total)</div>
<div class="t r" style="left:483.4px;width:140px;top:69.35px;letter-spacing:-0.1px;font-size:5.5px;transform:scaleY(1.3);-webkit-text-stroke-width:0.1px;">3753 (32.75%)</div>
<div class="t" style="left:648.3px;top:70.25px">Loss trades (% of total)</div>
<div class="t r" style="left:807.6px;width:140px;top:69.35px;letter-spacing:-0.1px;font-size:5.5px;transform:scaleY(1.3);-webkit-text-stroke-width:0.1px;">7705 (67.25%)</div>
<div class="row g" style="top:79.60px;border-bottom:0.6px solid #dadada"></div>
<div class="t r" style="left:180.2px;width:120px;top:80.20px;">Largest</div>
<div class="t" style="left:324.5px;top:80.20px">profit trade</div>
<div class="t r" style="left:483.4px;width:140px;top:79.30px;letter-spacing:-0.1px;font-size:5.5px;transform:scaleY(1.3);-webkit-text-stroke-width:0.1px;">59.01</div>
<div class="t" style="left:648.3px;top:80.20px">loss trade</div>
<div class="t r" style="left:807.6px;width:140px;top:79.30px;letter-spacing:-0.1px;font-size:5.5px;transform:scaleY(1.3);-webkit-text-stroke-width:0.1px;">-28.52</div>
<div class="row" style="top:89.55px;border-bottom:0.6px solid #dadada"></div>
<div class="t r" style="left:180.2px;width:120px;top:90.15px;">Average</div>
<div class="t" style="left:324.5px;top:90.15px">profit trade</div>
<div class="t r" style="left:483.4px;width:140px;top:89.25px;letter-spacing:-0.1px;font-size:5.5px;transform:scaleY(1.3);-webkit-text-stroke-width:0.1px;">20.36</div>
<div class="t" style="left:648.3px;top:90.15px">loss trade</div>
<div class="t r" style="left:807.6px;width:140px;top:89.25px;letter-spacing:-0.1px;font-size:5.5px;transform:scaleY(1.3);-webkit-text-stroke-width:0.1px;">-8.54</div>
<div class="row g" style="top:99.50px;border-bottom:0.6px solid #dadada"></div>
<div class="t r" style="left:180.2px;width:120px;top:100.10px;">Maximum</div>
<div class="t" style="left:324.5px;top:100.10px">consecutive wins (profit in money)</div>
<div class="t r" style="left:483.4px;width:140px;top:99.20px;letter-spacing:-0.1px;font-size:5.5px;transform:scaleY(1.3);-webkit-text-stroke-width:0.1px;">21 (428.61)</div>
<div class="t" style="left:648.3px;top:100.10px">consecutive losses (loss in money)</div>
<div class="t r" style="left:807.6px;width:140px;top:99.20px;letter-spacing:-0.1px;font-size:5.5px;transform:scaleY(1.3);-webkit-text-stroke-width:0.1px;">54 (-793.37)</div>
<div class="row" style="top:109.45px;border-bottom:0.6px solid #dadada"></div>
<div class="t r" style="left:180.2px;width:120px;top:110.05px;">Maximal</div>
<div class="t" style="left:324.5px;top:110.05px">consecutive profit (count of wins)</div>
<div class="t r" style="left:483.4px;width:140px;top:109.15px;letter-spacing:-0.1px;font-size:5.5px;transform:scaleY(1.3);-webkit-text-stroke-width:0.1px;">637.14 (15)</div>
<div class="t" style="left:648.3px;top:110.05px">consecutive loss (count of losses)</div>
<div class="t r" style="left:807.6px;width:140px;top:109.15px;letter-spacing:-0.1px;font-size:5.5px;transform:scaleY(1.3);-webkit-text-stroke-width:0.1px;">-793.37 (54)</div>
<div class="row g" style="top:119.40px;border-bottom:0.6px solid #dadada"></div>
<div class="t r" style="left:180.2px;width:120px;top:120.00px;">Average</div>
<div class="t" style="left:324.5px;top:120.00px">consecutive wins</div>
<div class="t r" style="left:483.4px;width:140px;top:119.10px;letter-spacing:-0.1px;font-size:5.5px;transform:scaleY(1.3);-webkit-text-stroke-width:0.1px;">3</div>
<div class="t" style="left:648.3px;top:120.00px">consecutive losses</div>
<div class="t r" style="left:807.6px;width:140px;top:119.10px;letter-spacing:-0.1px;font-size:5.5px;transform:scaleY(1.3);-webkit-text-stroke-width:0.1px;">7</div>
</div>
<div class="tabbar" style="left:12px;top:498.6px;width:948px;height:12.5px;border-top:0.8px solid #707070"></div>
<div class="tab" style="left:18px;top:499px">Settings</div>
<div class="tab" style="left:44.5px;top:499px">|</div>
<div class="tab" style="left:49px;top:499px">Results</div>
<div class="tab" style="left:72.5px;top:499px">|</div>
<div class="tab" style="left:77.5px;top:499px">Graph</div>
<div class="tab" style="left:131px;top:499px">Journal</div>
<div class="tab" style="left:155px;top:499px">|</div>
<div class="tab on" style="left:98.3px;top:499px;width:27px;height:11px;text-align:center">Report</div>
<div class="a" style="left:5px;top:511.5px;width:955px;height:5px;background:#f0f0f0;border-top:0.6px solid #d8d8d8"></div>
<div class="a" style="left:607.5px;top:512.5px;width:0.6px;height:4px;background:#c4c4c4"></div>
<div class="a" style="left:665.6px;top:512.5px;width:0.6px;height:4px;background:#c4c4c4"></div>
<div class="a" style="left:717px;top:512.5px;width:0.6px;height:4px;background:#c4c4c4"></div>
<div class="a" style="left:751.9px;top:512.5px;width:0.6px;height:4px;background:#c4c4c4"></div>
<div class="a" style="left:787.5px;top:512.5px;width:0.6px;height:4px;background:#c4c4c4"></div>
<div class="a" style="left:822px;top:512.5px;width:0.6px;height:4px;background:#c4c4c4"></div>
<div class="a" style="left:856.9px;top:512.5px;width:0.6px;height:4px;background:#c4c4c4"></div>
<div class="a" style="left:888.7px;top:512.5px;width:0.6px;height:4px;background:#c4c4c4"></div>
<div class="a" style="left:893px;top:513px;width:10px;height:3px;background:repeating-linear-gradient(90deg,#a8c078 0,#a8c078 1px,#eef2e0 1px,#eef2e0 2px)"></div>
</div></body></html>
